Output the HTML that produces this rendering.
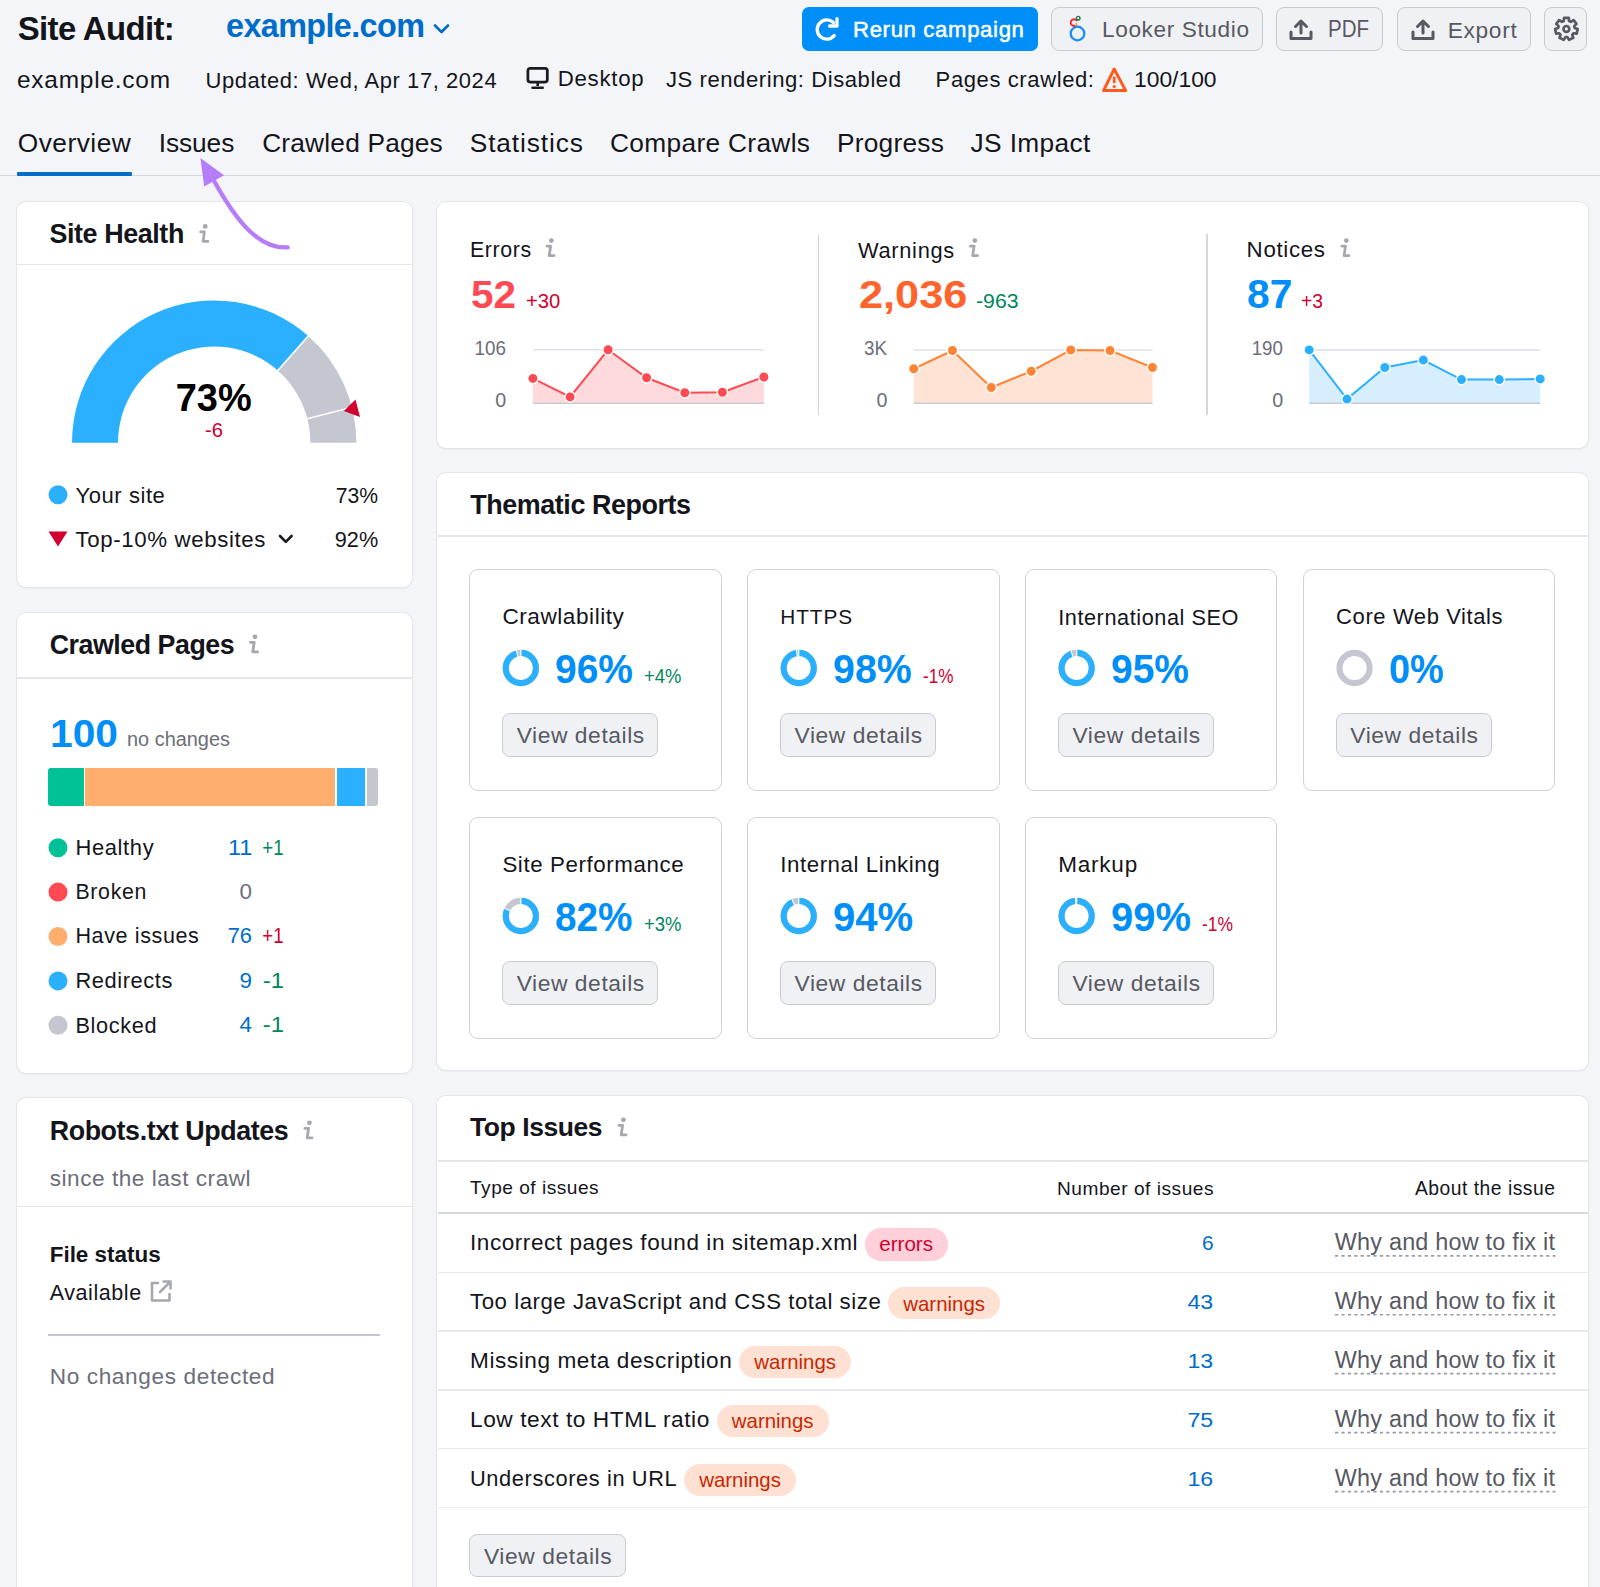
<!DOCTYPE html><html><head><meta charset="utf-8"><style>
html,body{margin:0;padding:0;}
body{width:1600px;height:1587px;position:relative;overflow:hidden;background:#f4f5f9;font-family:"Liberation Sans",sans-serif;}
.t{position:absolute;white-space:nowrap;}
</style></head><body>
<div class="t" style="left:17.75px;top:13.34px;font-size:32.91px;line-height:32.91px;color:#14151b;font-weight:700;letter-spacing:-0.631px;">Site Audit:</div>
<div class="t" style="left:226.00px;top:9.82px;font-size:32.35px;line-height:32.35px;color:#006dca;font-weight:700;letter-spacing:-0.597px;">example.com</div>
<svg style="position:absolute;left:433px;top:23px" width="17" height="12" viewBox="0 0 17 12"><path d="M2 2.5 L8.5 9 L15 2.5" fill="none" stroke="#006dca" stroke-width="2.6" stroke-linecap="round" stroke-linejoin="round"/></svg>
<div class="t" style="left:17.00px;top:67.66px;font-size:24.44px;line-height:24.44px;color:#14151b;font-weight:400;letter-spacing:0.767px;">example.com</div>
<div class="t" style="left:205.60px;top:69.78px;font-size:21.94px;line-height:21.94px;color:#14151b;font-weight:400;letter-spacing:0.582px;">Updated: Wed, Apr 17, 2024</div>
<svg style="position:absolute;left:526px;top:66px" width="23" height="24" viewBox="0 0 23 24"><rect x="1.9" y="2.4" width="19.4" height="13.6" rx="2.2" fill="none" stroke="#191b23" stroke-width="2.75"/><rect x="10.4" y="17" width="2.6" height="3" fill="#191b23"/><rect x="5.25" y="20.4" width="12.75" height="2.6" rx="1.3" fill="#191b23"/></svg>
<div class="t" style="left:557.70px;top:67.75px;font-size:22.27px;line-height:22.27px;color:#14151b;font-weight:400;letter-spacing:0.718px;">Desktop</div>
<div class="t" style="left:666.00px;top:68.92px;font-size:22.07px;line-height:22.07px;color:#14151b;font-weight:400;letter-spacing:0.559px;">JS rendering: Disabled</div>
<div class="t" style="left:935.60px;top:69.37px;font-size:22.01px;line-height:22.01px;color:#14151b;font-weight:400;letter-spacing:0.610px;">Pages crawled:</div>
<svg style="position:absolute;left:1101px;top:66px" width="28" height="28" viewBox="0 0 28 28"><path d="M13.2 3 L24.7 24.6 H2.5 Z" fill="none" stroke="#ff5a1f" stroke-width="3" stroke-linejoin="round"/><rect x="11.8" y="10.5" width="2.8" height="6.8" rx="1" fill="#ff5a1f"/><circle cx="13.2" cy="20.6" r="1.6" fill="#ff5a1f"/></svg>
<div class="t" style="left:1134.00px;top:69.26px;font-size:22.14px;line-height:22.14px;color:#14151b;font-weight:400;transform:scaleX(1.0322);transform-origin:left center;">100/100</div>
<div style="position:absolute;left:802px;top:7px;width:236px;height:44px;background:#008ff8;border-radius:7px;"></div>
<svg style="position:absolute;left:0;top:0" width="1600" height="60"><path d="M833.4 22.5 A9.6 9.6 0 1 0 834.2 35.6" fill="none" stroke="#fff" stroke-width="3.3" stroke-linecap="round"/><path d="M829.6 26 H837 V18.6" fill="none" stroke="#fff" stroke-width="3.3" stroke-linecap="round" stroke-linejoin="round"/></svg>
<div class="t" style="left:853.00px;top:19.36px;font-size:22.14px;line-height:22.14px;color:#fff;font-weight:400;-webkit-text-stroke:0.5px #fff;letter-spacing:0.659px;">Rerun campaign</div>
<div style="position:absolute;left:1051px;top:7px;width:212px;height:44px;background:#f0f1f4;border:1.3px solid #c9cbd3;border-radius:8px;box-sizing:border-box;"></div>
<svg style="position:absolute;left:1066px;top:14px" width="24" height="32" viewBox="0 0 24 32"><circle cx="11.5" cy="19.5" r="6.8" fill="none" stroke="#1a8cff" stroke-width="2.3"/><path d="M9.5 11.5 A3.3 3.3 0 1 1 11 7.2" fill="none" stroke="#f5222d" stroke-width="1.8"/><path d="M10.6 9.2 L10.2 12" stroke="#ff8c2b" stroke-width="1.6"/><circle cx="12.2" cy="4.2" r="1.8" fill="none" stroke="#1b7b4a" stroke-width="1.4"/></svg>
<div class="t" style="left:1102.00px;top:18.94px;font-size:22.63px;line-height:22.63px;color:#575963;font-weight:400;letter-spacing:0.614px;">Looker Studio</div>
<div style="position:absolute;left:1276px;top:7px;width:107px;height:44px;background:#f0f1f4;border:1.3px solid #c9cbd3;border-radius:8px;box-sizing:border-box;"></div>
<svg style="position:absolute;left:1289px;top:18px" width="24" height="23" viewBox="0 0 24 23"><path d="M12 15 V3 M6.5 8.5 L12 3 L17.5 8.5" fill="none" stroke="#575963" stroke-width="3" stroke-linecap="round" stroke-linejoin="round"/><path d="M2 14 V20.5 H22 V14" fill="none" stroke="#575963" stroke-width="3" stroke-linecap="round" stroke-linejoin="round"/></svg>
<div class="t" style="left:1327.60px;top:18.38px;font-size:23.3px;line-height:23.3px;color:#575963;font-weight:400;transform:scaleX(0.8798);transform-origin:left center;">PDF</div>
<div style="position:absolute;left:1397px;top:7px;width:134px;height:44px;background:#f0f1f4;border:1.3px solid #c9cbd3;border-radius:8px;box-sizing:border-box;"></div>
<svg style="position:absolute;left:1410.5px;top:18px" width="24" height="23" viewBox="0 0 24 23"><path d="M12 15 V3 M6.5 8.5 L12 3 L17.5 8.5" fill="none" stroke="#575963" stroke-width="3" stroke-linecap="round" stroke-linejoin="round"/><path d="M2 14 V20.5 H22 V14" fill="none" stroke="#575963" stroke-width="3" stroke-linecap="round" stroke-linejoin="round"/></svg>
<div class="t" style="left:1447.70px;top:18.89px;font-size:22.69px;line-height:22.69px;color:#575963;font-weight:400;letter-spacing:0.685px;">Export</div>
<div style="position:absolute;left:1544px;top:7px;width:43px;height:44px;background:#f0f1f4;border:1.3px solid #c9cbd3;border-radius:8px;box-sizing:border-box;"></div>
<svg style="position:absolute;left:0;top:0" width="1600" height="60"><path d="M1563.70 21.05 L1564.05 17.85 L1568.75 17.85 L1569.10 21.05 L1570.85 21.89 L1573.58 20.17 L1576.51 23.85 L1574.22 26.12 L1574.65 28.01 L1577.70 29.07 L1576.65 33.65 L1573.45 33.28 L1572.24 34.80 L1573.31 37.84 L1569.08 39.88 L1567.37 37.14 L1565.43 37.14 L1563.72 39.88 L1559.49 37.84 L1560.56 34.80 L1559.35 33.28 L1556.15 33.65 L1555.10 29.07 L1558.15 28.01 L1558.58 26.12 L1556.29 23.85 L1559.22 20.17 L1561.95 21.89 Z" fill="none" stroke="#575963" stroke-width="2.7" stroke-linejoin="round"/><circle cx="1566.4" cy="28.9" r="2.9" fill="none" stroke="#575963" stroke-width="2.7"/></svg>
<div class="t" style="left:17.80px;top:130.44px;font-size:26.3px;line-height:26.3px;color:#14151b;font-weight:400;letter-spacing:0.486px;">Overview</div>
<div class="t" style="left:158.70px;top:130.44px;font-size:26.3px;line-height:26.3px;color:#14151b;font-weight:400;letter-spacing:-0.081px;">Issues</div>
<div class="t" style="left:262.20px;top:130.44px;font-size:26.3px;line-height:26.3px;color:#14151b;font-weight:400;letter-spacing:0.188px;">Crawled Pages</div>
<div class="t" style="left:469.80px;top:130.44px;font-size:26.3px;line-height:26.3px;color:#14151b;font-weight:400;letter-spacing:0.864px;">Statistics</div>
<div class="t" style="left:610.00px;top:130.44px;font-size:26.3px;line-height:26.3px;color:#14151b;font-weight:400;letter-spacing:0.321px;">Compare Crawls</div>
<div class="t" style="left:837.00px;top:130.44px;font-size:26.3px;line-height:26.3px;color:#14151b;font-weight:400;letter-spacing:0.224px;">Progress</div>
<div class="t" style="left:970.60px;top:130.44px;font-size:26.3px;line-height:26.3px;color:#14151b;font-weight:400;letter-spacing:0.348px;">JS Impact</div>
<div style="position:absolute;left:0px;top:175px;width:1600px;height:1px;background:#d5d7de;"></div>
<div style="position:absolute;left:17px;top:172px;width:115px;height:4px;background:#006dca;border-radius:1px;"></div>
<div style="position:absolute;left:16.5px;top:201.5px;width:395.0px;height:385.0px;background:#fff;border-radius:9px;box-shadow:0 0 0 1px #e4e5ea, 0 1px 2px rgba(25,27,35,.12);"></div>
<div style="position:absolute;left:16.5px;top:612.5px;width:395.0px;height:460.0px;background:#fff;border-radius:9px;box-shadow:0 0 0 1px #e4e5ea, 0 1px 2px rgba(25,27,35,.12);"></div>
<div style="position:absolute;left:16.5px;top:1097.5px;width:395.0px;height:502.5px;background:#fff;border-radius:9px;box-shadow:0 0 0 1px #e4e5ea, 0 1px 2px rgba(25,27,35,.12);"></div>
<div style="position:absolute;left:436.5px;top:202px;width:1151.0px;height:245.5px;background:#fff;border-radius:9px;box-shadow:0 0 0 1px #e4e5ea, 0 1px 2px rgba(25,27,35,.12);"></div>
<div style="position:absolute;left:436.5px;top:473px;width:1151.0px;height:596.5px;background:#fff;border-radius:9px;box-shadow:0 0 0 1px #e4e5ea, 0 1px 2px rgba(25,27,35,.12);"></div>
<div style="position:absolute;left:436.5px;top:1095.5px;width:1151.0px;height:504.5px;background:#fff;border-radius:9px;box-shadow:0 0 0 1px #e4e5ea, 0 1px 2px rgba(25,27,35,.12);"></div>
<div class="t" style="left:49.40px;top:220.63px;font-size:26.9px;line-height:26.9px;color:#14151b;font-weight:700;letter-spacing:-0.401px;">Site Health</div>
<div style="position:absolute;left:16.5px;top:263.65px;width:395.0px;height:1.5px;background:#e4e5ea;"></div>
<div class="t" style="left:175.70px;top:380.46px;font-size:37.97px;line-height:37.97px;color:#000;font-weight:700;">73%</div>
<div class="t" style="left:205.30px;top:419.97px;font-size:20.0px;line-height:20.0px;color:#d1002f;font-weight:400;transform:scaleX(1.0123);transform-origin:left center;">-6</div>
<div class="t" style="left:75.50px;top:484.55px;font-size:22.03px;line-height:22.03px;color:#14151b;font-weight:400;letter-spacing:0.561px;">Your site</div>
<div class="t" style="right:1221.80px;top:484.94px;font-size:21.57px;line-height:21.57px;color:#14151b;font-weight:400;transform:scaleX(0.9798);transform-origin:right center;">73%</div>
<div class="t" style="left:75.50px;top:528.77px;font-size:22.24px;line-height:22.24px;color:#14151b;font-weight:400;letter-spacing:0.635px;">Top-10% websites</div>
<div class="t" style="right:1221.80px;top:529.34px;font-size:21.57px;line-height:21.57px;color:#14151b;font-weight:400;transform:scaleX(1.0053);transform-origin:right center;">92%</div>
<div class="t" style="left:49.70px;top:631.92px;font-size:26.79px;line-height:26.79px;color:#14151b;font-weight:700;letter-spacing:-0.465px;">Crawled Pages</div>
<div style="position:absolute;left:16.5px;top:677.25px;width:395.0px;height:1.5px;background:#e4e5ea;"></div>
<div class="t" style="left:49.70px;top:713.84px;font-size:39.29px;line-height:39.29px;color:#008ff8;font-weight:700;transform:scaleX(1.0374);transform-origin:left center;">100</div>
<div class="t" style="left:127.00px;top:730.04px;font-size:19.92px;line-height:19.92px;color:#6c6e79;font-weight:400;">no changes</div>
<div style="position:absolute;left:48.4px;top:768.2px;width:330px;height:38px;border-radius:3px;overflow:hidden;background:#fff"><div style="position:absolute;left:0;top:0;width:35.2px;height:38px;background:#00c296"></div><div style="position:absolute;left:36.7px;top:0;width:250.4px;height:38px;background:#ffae6e"></div><div style="position:absolute;left:288.6px;top:0;width:28px;height:38px;background:#2bb0ff"></div><div style="position:absolute;left:318.3px;top:0;width:12px;height:38px;background:#c4c7cf"></div></div>
<div class="t" style="left:75.40px;top:837.03px;font-size:21.94px;line-height:21.94px;color:#14151b;font-weight:400;letter-spacing:0.652px;">Healthy</div>
<div class="t" style="right:1348.00px;top:836.61px;font-size:22.43px;line-height:22.43px;color:#006dca;font-weight:400;transform:scaleX(1.0437);transform-origin:right center;">11</div>
<div class="t" style="right:1316.50px;top:836.61px;font-size:22.43px;line-height:22.43px;color:#00865c;font-weight:400;transform:scaleX(0.8290);transform-origin:right center;">+1</div>
<div class="t" style="left:75.40px;top:881.98px;font-size:21.29px;line-height:21.29px;color:#14151b;font-weight:400;letter-spacing:0.709px;">Broken</div>
<div class="t" style="right:1348.00px;top:881.01px;font-size:22.43px;line-height:22.43px;color:#6c6e79;font-weight:400;">0</div>
<div class="t" style="left:75.40px;top:926.17px;font-size:21.54px;line-height:21.54px;color:#14151b;font-weight:400;letter-spacing:0.618px;">Have issues</div>
<div class="t" style="right:1348.00px;top:925.41px;font-size:22.43px;line-height:22.43px;color:#006dca;font-weight:400;transform:scaleX(0.9741);transform-origin:right center;">76</div>
<div class="t" style="right:1316.50px;top:925.41px;font-size:22.43px;line-height:22.43px;color:#d1002f;font-weight:400;transform:scaleX(0.8290);transform-origin:right center;">+1</div>
<div class="t" style="left:75.40px;top:970.33px;font-size:21.82px;line-height:21.82px;color:#14151b;font-weight:400;letter-spacing:0.606px;">Redirects</div>
<div class="t" style="right:1348.00px;top:969.81px;font-size:22.43px;line-height:22.43px;color:#006dca;font-weight:400;">9</div>
<div class="t" style="right:1316.50px;top:969.81px;font-size:22.43px;line-height:22.43px;color:#00865c;font-weight:400;transform:scaleX(1.0631);transform-origin:right center;">-1</div>
<div class="t" style="left:75.40px;top:1014.82px;font-size:21.71px;line-height:21.71px;color:#14151b;font-weight:400;letter-spacing:0.678px;">Blocked</div>
<div class="t" style="right:1348.00px;top:1014.21px;font-size:22.43px;line-height:22.43px;color:#006dca;font-weight:400;">4</div>
<div class="t" style="right:1316.50px;top:1014.21px;font-size:22.43px;line-height:22.43px;color:#00865c;font-weight:400;transform:scaleX(1.0631);transform-origin:right center;">-1</div>
<div class="t" style="left:49.70px;top:1117.87px;font-size:26.85px;line-height:26.85px;color:#14151b;font-weight:700;letter-spacing:-0.418px;">Robots.txt Updates</div>
<div class="t" style="left:49.70px;top:1167.57px;font-size:22.6px;line-height:22.6px;color:#6c6e79;font-weight:400;letter-spacing:0.531px;">since the last crawl</div>
<div style="position:absolute;left:16.5px;top:1205.85px;width:395.0px;height:1.5px;background:#e4e5ea;"></div>
<div class="t" style="left:49.70px;top:1243.80px;font-size:22.45px;line-height:22.45px;color:#14151b;font-weight:700;">File status</div>
<div class="t" style="left:49.70px;top:1283.08px;font-size:21.52px;line-height:21.52px;color:#14151b;font-weight:400;letter-spacing:0.570px;">Available</div>
<div style="position:absolute;left:48.4px;top:1333.7px;width:331.40000000000003px;height:2.0px;background:#c4c7cf;"></div>
<div class="t" style="left:49.70px;top:1366.15px;font-size:22.62px;line-height:22.62px;color:#6c6e79;font-weight:400;letter-spacing:0.624px;">No changes detected</div>
<div class="t" style="left:470.00px;top:240.00px;font-size:21.38px;line-height:21.38px;color:#14151b;font-weight:400;letter-spacing:0.611px;">Errors</div>
<div class="t" style="left:471.25px;top:275.34px;font-size:39.29px;line-height:39.29px;color:#ff4953;font-weight:700;transform:scaleX(1.0298);transform-origin:left center;">52</div>
<div class="t" style="left:525.75px;top:291.37px;font-size:20.36px;line-height:20.36px;color:#d1002f;font-weight:400;transform:scaleX(0.9917);transform-origin:left center;">+30</div>
<div class="t" style="right:1093.70px;top:338.92px;font-size:19.71px;line-height:19.71px;color:#6c6e79;font-weight:400;transform:scaleX(0.9549);transform-origin:right center;">106</div>
<div class="t" style="right:1093.70px;top:391.42px;font-size:19.71px;line-height:19.71px;color:#6c6e79;font-weight:400;">0</div>
<div style="position:absolute;left:817.5px;top:233.75px;width:1.5px;height:181.25px;background:#d5d7de;"></div>
<div class="t" style="left:858.00px;top:239.61px;font-size:21.84px;line-height:21.84px;color:#14151b;font-weight:400;letter-spacing:0.688px;">Warnings</div>
<div class="t" style="left:858.75px;top:274.84px;font-size:39.29px;line-height:39.29px;color:#ff642d;font-weight:700;transform:scaleX(1.1011);transform-origin:left center;">2,036</div>
<div class="t" style="left:976.25px;top:290.87px;font-size:20.36px;line-height:20.36px;color:#00865c;font-weight:400;transform:scaleX(1.0431);transform-origin:left center;">-963</div>
<div class="t" style="right:712.50px;top:338.92px;font-size:19.71px;line-height:19.71px;color:#6c6e79;font-weight:400;transform:scaleX(0.9540);transform-origin:right center;">3K</div>
<div class="t" style="right:712.50px;top:391.42px;font-size:19.71px;line-height:19.71px;color:#6c6e79;font-weight:400;">0</div>
<div style="position:absolute;left:1206px;top:233.75px;width:1.5px;height:181.25px;background:#d5d7de;"></div>
<div class="t" style="left:1246.60px;top:239.20px;font-size:22.33px;line-height:22.33px;color:#14151b;font-weight:400;letter-spacing:0.657px;">Notices</div>
<div class="t" style="left:1247.00px;top:274.44px;font-size:40.0px;line-height:40.0px;color:#008ff8;font-weight:700;transform:scaleX(1.0205);transform-origin:left center;">87</div>
<div class="t" style="left:1301.40px;top:291.07px;font-size:20.36px;line-height:20.36px;color:#d1002f;font-weight:400;transform:scaleX(0.9434);transform-origin:left center;">+3</div>
<div class="t" style="right:316.90px;top:339.22px;font-size:19.71px;line-height:19.71px;color:#6c6e79;font-weight:400;transform:scaleX(0.9489);transform-origin:right center;">190</div>
<div class="t" style="right:316.90px;top:391.42px;font-size:19.71px;line-height:19.71px;color:#6c6e79;font-weight:400;">0</div>
<div class="t" style="left:470.30px;top:491.72px;font-size:26.91px;line-height:26.91px;color:#14151b;font-weight:700;letter-spacing:-0.438px;">Thematic Reports</div>
<div style="position:absolute;left:437.5px;top:535.15px;width:1150.0px;height:1.5px;background:#e4e5ea;"></div>
<div style="position:absolute;left:469.4px;top:568.75px;width:252.30000000000007px;height:222.20000000000005px;background:#fff;border:1.5px solid #cfd2da;border-radius:9px;box-sizing:border-box;"></div>
<div class="t" style="left:502.40px;top:605.89px;font-size:22.58px;line-height:22.58px;color:#14151b;font-weight:400;letter-spacing:0.552px;">Crawlability</div>
<div class="t" style="left:554.90px;top:648.56px;font-size:40.57px;line-height:40.57px;color:#008ff8;font-weight:700;transform:scaleX(0.9606);transform-origin:left center;">96%</div>
<div class="t" style="left:644.30px;top:665.61px;font-size:20.43px;line-height:20.43px;color:#00865c;font-weight:400;transform:scaleX(0.8997);transform-origin:left center;">+4%</div>
<div style="position:absolute;left:502.04999999999995px;top:657.45px;width:156.29999999999995px;height:43.799999999999955px;"></div>
<div style="position:absolute;left:502.04999999999995px;top:713.2px;width:156.29999999999995px;height:43.799999999999955px;background:#f0f1f4;border:1.3px solid #c9cbd3;border-radius:8px;box-sizing:border-box;"></div>
<div class="t" style="left:516.65px;top:724.00px;font-size:22.8px;line-height:22.8px;color:#575963;font-weight:400;letter-spacing:0.578px;">View details</div>
<div style="position:absolute;left:747.3px;top:568.75px;width:252.29999999999995px;height:222.20000000000005px;background:#fff;border:1.5px solid #cfd2da;border-radius:9px;box-sizing:border-box;"></div>
<div class="t" style="left:780.30px;top:607.39px;font-size:20.8px;line-height:20.8px;color:#14151b;font-weight:400;letter-spacing:0.893px;">HTTPS</div>
<div class="t" style="left:832.80px;top:648.56px;font-size:40.57px;line-height:40.57px;color:#008ff8;font-weight:700;transform:scaleX(0.9699);transform-origin:left center;">98%</div>
<div class="t" style="left:922.95px;top:665.61px;font-size:20.43px;line-height:20.43px;color:#d1002f;font-weight:400;transform:scaleX(0.8395);transform-origin:left center;">-1%</div>
<div style="position:absolute;left:779.9499999999999px;top:657.45px;width:156.30000000000007px;height:43.799999999999955px;"></div>
<div style="position:absolute;left:779.9499999999999px;top:713.2px;width:156.30000000000007px;height:43.799999999999955px;background:#f0f1f4;border:1.3px solid #c9cbd3;border-radius:8px;box-sizing:border-box;"></div>
<div class="t" style="left:794.55px;top:724.00px;font-size:22.8px;line-height:22.8px;color:#575963;font-weight:400;letter-spacing:0.578px;">View details</div>
<div style="position:absolute;left:1025.1999999999998px;top:568.75px;width:252.29999999999995px;height:222.20000000000005px;background:#fff;border:1.5px solid #cfd2da;border-radius:9px;box-sizing:border-box;"></div>
<div class="t" style="left:1058.20px;top:606.63px;font-size:21.7px;line-height:21.7px;color:#14151b;font-weight:400;letter-spacing:0.564px;">International SEO</div>
<div class="t" style="left:1110.70px;top:648.56px;font-size:40.57px;line-height:40.57px;color:#008ff8;font-weight:700;transform:scaleX(0.9606);transform-origin:left center;">95%</div>
<div style="position:absolute;left:1057.85px;top:657.45px;width:156.29999999999995px;height:43.799999999999955px;"></div>
<div style="position:absolute;left:1057.85px;top:713.2px;width:156.29999999999995px;height:43.799999999999955px;background:#f0f1f4;border:1.3px solid #c9cbd3;border-radius:8px;box-sizing:border-box;"></div>
<div class="t" style="left:1072.45px;top:724.00px;font-size:22.8px;line-height:22.8px;color:#575963;font-weight:400;letter-spacing:0.578px;">View details</div>
<div style="position:absolute;left:1303.1px;top:568.75px;width:252.29999999999995px;height:222.20000000000005px;background:#fff;border:1.5px solid #cfd2da;border-radius:9px;box-sizing:border-box;"></div>
<div class="t" style="left:1336.10px;top:606.38px;font-size:22.0px;line-height:22.0px;color:#14151b;font-weight:400;letter-spacing:0.597px;">Core Web Vitals</div>
<div class="t" style="left:1388.60px;top:648.56px;font-size:40.57px;line-height:40.57px;color:#008ff8;font-weight:700;transform:scaleX(0.9346);transform-origin:left center;">0%</div>
<div style="position:absolute;left:1335.75px;top:657.45px;width:156.29999999999995px;height:43.799999999999955px;"></div>
<div style="position:absolute;left:1335.75px;top:713.2px;width:156.29999999999995px;height:43.799999999999955px;background:#f0f1f4;border:1.3px solid #c9cbd3;border-radius:8px;box-sizing:border-box;"></div>
<div class="t" style="left:1350.35px;top:724.00px;font-size:22.8px;line-height:22.8px;color:#575963;font-weight:400;letter-spacing:0.578px;">View details</div>
<div style="position:absolute;left:469.4px;top:816.75px;width:252.30000000000007px;height:222.20000000000005px;background:#fff;border:1.5px solid #cfd2da;border-radius:9px;box-sizing:border-box;"></div>
<div class="t" style="left:502.40px;top:854.11px;font-size:22.31px;line-height:22.31px;color:#14151b;font-weight:400;letter-spacing:0.603px;">Site Performance</div>
<div class="t" style="left:554.90px;top:896.56px;font-size:40.57px;line-height:40.57px;color:#008ff8;font-weight:700;transform:scaleX(0.9557);transform-origin:left center;">82%</div>
<div class="t" style="left:643.90px;top:913.61px;font-size:20.43px;line-height:20.43px;color:#00865c;font-weight:400;transform:scaleX(0.9045);transform-origin:left center;">+3%</div>
<div style="position:absolute;left:502.04999999999995px;top:905.45px;width:156.29999999999995px;height:43.799999999999955px;"></div>
<div style="position:absolute;left:502.04999999999995px;top:961.2px;width:156.29999999999995px;height:43.799999999999955px;background:#f0f1f4;border:1.3px solid #c9cbd3;border-radius:8px;box-sizing:border-box;"></div>
<div class="t" style="left:516.65px;top:972.00px;font-size:22.8px;line-height:22.8px;color:#575963;font-weight:400;letter-spacing:0.578px;">View details</div>
<div style="position:absolute;left:747.3px;top:816.75px;width:252.29999999999995px;height:222.20000000000005px;background:#fff;border:1.5px solid #cfd2da;border-radius:9px;box-sizing:border-box;"></div>
<div class="t" style="left:780.30px;top:854.11px;font-size:22.32px;line-height:22.32px;color:#14151b;font-weight:400;letter-spacing:0.535px;">Internal Linking</div>
<div class="t" style="left:832.80px;top:896.56px;font-size:40.57px;line-height:40.57px;color:#008ff8;font-weight:700;transform:scaleX(0.9890);transform-origin:left center;">94%</div>
<div style="position:absolute;left:779.9499999999999px;top:905.45px;width:156.30000000000007px;height:43.799999999999955px;"></div>
<div style="position:absolute;left:779.9499999999999px;top:961.2px;width:156.30000000000007px;height:43.799999999999955px;background:#f0f1f4;border:1.3px solid #c9cbd3;border-radius:8px;box-sizing:border-box;"></div>
<div class="t" style="left:794.55px;top:972.00px;font-size:22.8px;line-height:22.8px;color:#575963;font-weight:400;letter-spacing:0.578px;">View details</div>
<div style="position:absolute;left:1025.1999999999998px;top:816.75px;width:252.29999999999995px;height:222.20000000000005px;background:#fff;border:1.5px solid #cfd2da;border-radius:9px;box-sizing:border-box;"></div>
<div class="t" style="left:1058.20px;top:853.95px;font-size:22.51px;line-height:22.51px;color:#14151b;font-weight:400;letter-spacing:0.789px;">Markup</div>
<div class="t" style="left:1110.70px;top:896.56px;font-size:40.57px;line-height:40.57px;color:#008ff8;font-weight:700;transform:scaleX(0.9853);transform-origin:left center;">99%</div>
<div class="t" style="left:1202.10px;top:913.61px;font-size:20.43px;line-height:20.43px;color:#d1002f;font-weight:400;transform:scaleX(0.8533);transform-origin:left center;">-1%</div>
<div style="position:absolute;left:1057.85px;top:905.45px;width:156.29999999999995px;height:43.799999999999955px;"></div>
<div style="position:absolute;left:1057.85px;top:961.2px;width:156.29999999999995px;height:43.799999999999955px;background:#f0f1f4;border:1.3px solid #c9cbd3;border-radius:8px;box-sizing:border-box;"></div>
<div class="t" style="left:1072.45px;top:972.00px;font-size:22.8px;line-height:22.8px;color:#575963;font-weight:400;letter-spacing:0.578px;">View details</div>
<div class="t" style="left:470.00px;top:1114.17px;font-size:26.5px;line-height:26.5px;color:#14151b;font-weight:700;letter-spacing:-0.438px;">Top Issues</div>
<div style="position:absolute;left:437.5px;top:1160.0px;width:1150.0px;height:1.5px;background:#e4e5ea;"></div>
<div class="t" style="left:470.00px;top:1178.41px;font-size:19.13px;line-height:19.13px;color:#14151b;font-weight:400;letter-spacing:0.498px;">Type of issues</div>
<div class="t" style="left:1057.00px;top:1178.91px;font-size:19.13px;line-height:19.13px;color:#14151b;font-weight:400;letter-spacing:0.524px;">Number of issues</div>
<div class="t" style="left:1415.00px;top:1178.77px;font-size:19.29px;line-height:19.29px;color:#14151b;font-weight:400;letter-spacing:0.502px;">About the issue</div>
<div style="position:absolute;left:437.5px;top:1212.0px;width:1150.0px;height:2.0px;background:#d5d7de;"></div>
<div class="t" style="left:470.00px;top:1231.74px;font-size:22.52px;line-height:22.52px;color:#14151b;font-weight:400;letter-spacing:0.558px;">Incorrect pages found in sitemap.xml</div>
<div style="position:absolute;left:864.5px;top:1228.25px;width:83.0px;height:32.25px;background:#ffd0d9;border-radius:16px;"></div>
<div class="t" style="left:879.25px;top:1234.42px;font-size:20.59px;line-height:20.59px;color:#d1002f;font-weight:400;">errors</div>
<div class="t" style="right:386.50px;top:1233.14px;font-size:20.86px;line-height:20.86px;color:#006dca;font-weight:400;">6</div>
<div class="t" style="left:1334.80px;top:1230.90px;font-size:23.39px;line-height:23.39px;color:#575963;font-weight:400;letter-spacing:0.221px;">Why and how to fix it</div>
<div style="position:absolute;left:437.5px;top:1271.75px;width:1150.0px;height:1.5px;background:#e8e9ee;"></div>
<div class="t" style="left:470.00px;top:1290.94px;font-size:22.22px;line-height:22.22px;color:#14151b;font-weight:400;letter-spacing:0.539px;">Too large JavaScript and CSS total size</div>
<div style="position:absolute;left:888.25px;top:1287.2px;width:111.75px;height:32.25px;background:#ffe1d3;border-radius:16px;"></div>
<div class="t" style="left:903.25px;top:1293.51px;font-size:20.43px;line-height:20.43px;color:#c82700;font-weight:400;">warnings</div>
<div class="t" style="right:386.50px;top:1292.09px;font-size:20.86px;line-height:20.86px;color:#006dca;font-weight:400;transform:scaleX(1.1099);transform-origin:right center;">43</div>
<div class="t" style="left:1334.80px;top:1289.85px;font-size:23.39px;line-height:23.39px;color:#575963;font-weight:400;letter-spacing:0.221px;">Why and how to fix it</div>
<div style="position:absolute;left:437.5px;top:1330.45px;width:1150.0px;height:1.5px;background:#e8e9ee;"></div>
<div class="t" style="left:470.00px;top:1349.57px;font-size:22.6px;line-height:22.6px;color:#14151b;font-weight:400;letter-spacing:0.570px;">Missing meta description</div>
<div style="position:absolute;left:739.3px;top:1346.15px;width:111.75px;height:32.25px;background:#ffe1d3;border-radius:16px;"></div>
<div class="t" style="left:754.30px;top:1352.46px;font-size:20.43px;line-height:20.43px;color:#c82700;font-weight:400;">warnings</div>
<div class="t" style="right:386.50px;top:1351.04px;font-size:20.86px;line-height:20.86px;color:#006dca;font-weight:400;transform:scaleX(1.1099);transform-origin:right center;">13</div>
<div class="t" style="left:1334.80px;top:1348.80px;font-size:23.39px;line-height:23.39px;color:#575963;font-weight:400;letter-spacing:0.221px;">Why and how to fix it</div>
<div style="position:absolute;left:437.5px;top:1389.15px;width:1150.0px;height:1.5px;background:#e8e9ee;"></div>
<div class="t" style="left:470.00px;top:1408.44px;font-size:22.69px;line-height:22.69px;color:#14151b;font-weight:400;letter-spacing:0.567px;">Low text to HTML ratio</div>
<div style="position:absolute;left:716.8px;top:1405.1px;width:111.75px;height:32.25px;background:#ffe1d3;border-radius:16px;"></div>
<div class="t" style="left:731.80px;top:1411.41px;font-size:20.43px;line-height:20.43px;color:#c82700;font-weight:400;">warnings</div>
<div class="t" style="right:386.50px;top:1409.99px;font-size:20.86px;line-height:20.86px;color:#006dca;font-weight:400;transform:scaleX(1.1099);transform-origin:right center;">75</div>
<div class="t" style="left:1334.80px;top:1407.75px;font-size:23.39px;line-height:23.39px;color:#575963;font-weight:400;letter-spacing:0.221px;">Why and how to fix it</div>
<div style="position:absolute;left:437.5px;top:1447.85px;width:1150.0px;height:1.5px;background:#e8e9ee;"></div>
<div class="t" style="left:470.00px;top:1468.14px;font-size:21.81px;line-height:21.81px;color:#14151b;font-weight:400;letter-spacing:0.609px;">Underscores in URL</div>
<div style="position:absolute;left:684.2px;top:1464.05px;width:111.75px;height:32.25px;background:#ffe1d3;border-radius:16px;"></div>
<div class="t" style="left:699.20px;top:1470.36px;font-size:20.43px;line-height:20.43px;color:#c82700;font-weight:400;">warnings</div>
<div class="t" style="right:386.50px;top:1468.94px;font-size:20.86px;line-height:20.86px;color:#006dca;font-weight:400;transform:scaleX(1.1099);transform-origin:right center;">16</div>
<div class="t" style="left:1334.80px;top:1466.70px;font-size:23.39px;line-height:23.39px;color:#575963;font-weight:400;letter-spacing:0.221px;">Why and how to fix it</div>
<div style="position:absolute;left:437.5px;top:1506.55px;width:1150.0px;height:1.5px;background:#e8e9ee;"></div>
<div style="position:absolute;left:469.4px;top:1534.3px;width:156.30000000000007px;height:43.100000000000136px;background:#f0f1f4;border:1.3px solid #c9cbd3;border-radius:8px;box-sizing:border-box;"></div>
<div class="t" style="left:484.00px;top:1545.10px;font-size:22.8px;line-height:22.8px;color:#575963;font-weight:400;letter-spacing:0.578px;">View details</div>
<svg style="position:absolute;left:0;top:0" width="1600" height="1587"><g transform="translate(199.80,224.00)"><circle cx="5.4" cy="2.4" r="2.4" fill="#a6a8b0"/><path d="M0.9 7.9 H4.6 L3.2 17.4 H8.1" fill="none" stroke="#a6a8b0" stroke-width="2.8" stroke-linecap="round" stroke-linejoin="round"/></g><path d="M72.00 442.70 A142.2 142.2 0 0 1 308.24 336.03 L277.82 370.54 A96.2 96.2 0 0 0 118.00 442.70 Z" fill="#2bb0ff"/><path d="M308.24 336.03 A142.2 142.2 0 0 1 356.40 442.70 L310.40 442.70 A96.2 96.2 0 0 0 277.82 370.54 Z" fill="#c4c7cf"/><line x1="277.16" y1="371.29" x2="308.90" y2="335.28" stroke="#fff" stroke-width="1.6"/><line x1="306.41" y1="419.02" x2="352.90" y2="407.09" stroke="#fff" stroke-width="1.6"/><path d="M343.9 411 L355.5 399.5 L360 417 Z" fill="#d1002f"/><circle cx="58" cy="494.8" r="9.5" fill="#2bb0ff"/><path d="M48.5 531.5 H67.5 L58 546.5 Z" fill="#d1002f"/><path d="M280 536 L285.8 541.8 L291.6 536" fill="none" stroke="#191b23" stroke-width="2.6" stroke-linecap="round" stroke-linejoin="round"/><g transform="translate(249.60,634.40)"><circle cx="5.4" cy="2.4" r="2.4" fill="#a6a8b0"/><path d="M0.9 7.9 H4.6 L3.2 17.4 H8.1" fill="none" stroke="#a6a8b0" stroke-width="2.8" stroke-linecap="round" stroke-linejoin="round"/></g><circle cx="58" cy="847.70" r="9.5" fill="#00c296"/><circle cx="58" cy="892.10" r="9.5" fill="#ff4953"/><circle cx="58" cy="936.50" r="9.5" fill="#ffae6e"/><circle cx="58" cy="980.90" r="9.5" fill="#2bb0ff"/><circle cx="58" cy="1025.30" r="9.5" fill="#c4c7cf"/><g transform="translate(304.00,1120.40)"><circle cx="5.4" cy="2.4" r="2.4" fill="#a6a8b0"/><path d="M0.9 7.9 H4.6 L3.2 17.4 H8.1" fill="none" stroke="#a6a8b0" stroke-width="2.8" stroke-linecap="round" stroke-linejoin="round"/></g><g fill="none" stroke="#a6a8b0" stroke-width="2.6" stroke-linecap="round" stroke-linejoin="round"><path d="M158 1283 H152 V1300.5 H169.5 V1294"/><path d="M160 1292 L170 1282 M163.5 1281.5 H170.5 V1288.5"/></g><g transform="translate(546.00,238.20)"><circle cx="5.4" cy="2.4" r="2.4" fill="#a6a8b0"/><path d="M0.9 7.9 H4.6 L3.2 17.4 H8.1" fill="none" stroke="#a6a8b0" stroke-width="2.8" stroke-linecap="round" stroke-linejoin="round"/></g><line x1="532.9" y1="349.75" x2="763.9" y2="349.75" stroke="#e0e1e9" stroke-width="1.6"/><polygon points="532.9,403.3 532.90,378.40 570.10,396.90 608.10,349.75 646.60,377.80 684.80,392.70 722.40,392.20 763.90,377.00 763.9,403.3" fill="#ffdadd"/><line x1="532.9" y1="403.3" x2="763.9" y2="403.3" stroke="#c9cbd3" stroke-width="1.6"/><polyline points="532.90,378.40 570.10,396.90 608.10,349.75 646.60,377.80 684.80,392.70 722.40,392.20 763.90,377.00" fill="none" stroke="#ff4953" stroke-width="2"/><circle cx="532.90" cy="378.40" r="5.2" fill="#ff4953" stroke="#fff" stroke-width="1.4"/><circle cx="570.10" cy="396.90" r="5.2" fill="#ff4953" stroke="#fff" stroke-width="1.4"/><circle cx="608.10" cy="349.75" r="5.2" fill="#ff4953" stroke="#fff" stroke-width="1.4"/><circle cx="646.60" cy="377.80" r="5.2" fill="#ff4953" stroke="#fff" stroke-width="1.4"/><circle cx="684.80" cy="392.70" r="5.2" fill="#ff4953" stroke="#fff" stroke-width="1.4"/><circle cx="722.40" cy="392.20" r="5.2" fill="#ff4953" stroke="#fff" stroke-width="1.4"/><circle cx="763.90" cy="377.00" r="5.2" fill="#ff4953" stroke="#fff" stroke-width="1.4"/><g transform="translate(969.50,238.20)"><circle cx="5.4" cy="2.4" r="2.4" fill="#a6a8b0"/><path d="M0.9 7.9 H4.6 L3.2 17.4 H8.1" fill="none" stroke="#a6a8b0" stroke-width="2.8" stroke-linecap="round" stroke-linejoin="round"/></g><line x1="913.75" y1="350" x2="1152.5" y2="350" stroke="#e0e1e9" stroke-width="1.6"/><polygon points="913.75,403.25 913.75,368.75 952.50,350.50 991.25,387.50 1031.25,371.25 1070.75,350.00 1110.00,350.50 1152.50,367.50 1152.5,403.25" fill="#ffe4d6"/><line x1="913.75" y1="403.25" x2="1152.5" y2="403.25" stroke="#c9cbd3" stroke-width="1.6"/><polyline points="913.75,368.75 952.50,350.50 991.25,387.50 1031.25,371.25 1070.75,350.00 1110.00,350.50 1152.50,367.50" fill="none" stroke="#ff8534" stroke-width="2"/><circle cx="913.75" cy="368.75" r="5.2" fill="#ff8534" stroke="#fff" stroke-width="1.4"/><circle cx="952.50" cy="350.50" r="5.2" fill="#ff8534" stroke="#fff" stroke-width="1.4"/><circle cx="991.25" cy="387.50" r="5.2" fill="#ff8534" stroke="#fff" stroke-width="1.4"/><circle cx="1031.25" cy="371.25" r="5.2" fill="#ff8534" stroke="#fff" stroke-width="1.4"/><circle cx="1070.75" cy="350.00" r="5.2" fill="#ff8534" stroke="#fff" stroke-width="1.4"/><circle cx="1110.00" cy="350.50" r="5.2" fill="#ff8534" stroke="#fff" stroke-width="1.4"/><circle cx="1152.50" cy="367.50" r="5.2" fill="#ff8534" stroke="#fff" stroke-width="1.4"/><g transform="translate(1340.90,238.20)"><circle cx="5.4" cy="2.4" r="2.4" fill="#a6a8b0"/><path d="M0.9 7.9 H4.6 L3.2 17.4 H8.1" fill="none" stroke="#a6a8b0" stroke-width="2.8" stroke-linecap="round" stroke-linejoin="round"/></g><line x1="1309.2" y1="349.9" x2="1540.2" y2="349.9" stroke="#e0e1e9" stroke-width="1.6"/><polygon points="1309.2,403.3 1309.20,349.90 1347.00,399.10 1384.80,367.50 1423.30,360.10 1461.50,379.60 1499.30,379.60 1540.20,378.90 1540.2,403.3" fill="#d6eefe"/><line x1="1309.2" y1="403.3" x2="1540.2" y2="403.3" stroke="#c9cbd3" stroke-width="1.6"/><polyline points="1309.20,349.90 1347.00,399.10 1384.80,367.50 1423.30,360.10 1461.50,379.60 1499.30,379.60 1540.20,378.90" fill="none" stroke="#2bb0ff" stroke-width="2"/><circle cx="1309.20" cy="349.90" r="5.2" fill="#2bb0ff" stroke="#fff" stroke-width="1.4"/><circle cx="1347.00" cy="399.10" r="5.2" fill="#2bb0ff" stroke="#fff" stroke-width="1.4"/><circle cx="1384.80" cy="367.50" r="5.2" fill="#2bb0ff" stroke="#fff" stroke-width="1.4"/><circle cx="1423.30" cy="360.10" r="5.2" fill="#2bb0ff" stroke="#fff" stroke-width="1.4"/><circle cx="1461.50" cy="379.60" r="5.2" fill="#2bb0ff" stroke="#fff" stroke-width="1.4"/><circle cx="1499.30" cy="379.60" r="5.2" fill="#2bb0ff" stroke="#fff" stroke-width="1.4"/><circle cx="1540.20" cy="378.90" r="5.2" fill="#2bb0ff" stroke="#fff" stroke-width="1.4"/><circle cx="520.85" cy="668.00" r="15.1" fill="none" stroke="#c4c7cf" stroke-width="6.1"/><circle cx="520.85" cy="668.00" r="15.1" fill="none" stroke="#2bb0ff" stroke-width="6.1" stroke-dasharray="91.08 94.88" transform="rotate(-90 520.85 668.00)"/><line x1="520.85" y1="656.45" x2="520.85" y2="649.35" stroke="#fff" stroke-width="1.2"/><line x1="517.98" y1="656.81" x2="516.21" y2="649.94" stroke="#fff" stroke-width="1.2"/><circle cx="798.75" cy="668.00" r="15.1" fill="none" stroke="#c4c7cf" stroke-width="6.1"/><circle cx="798.75" cy="668.00" r="15.1" fill="none" stroke="#2bb0ff" stroke-width="6.1" stroke-dasharray="92.98 94.88" transform="rotate(-90 798.75 668.00)"/><line x1="798.75" y1="656.45" x2="798.75" y2="649.35" stroke="#fff" stroke-width="1.2"/><line x1="797.30" y1="656.54" x2="796.41" y2="649.50" stroke="#fff" stroke-width="1.2"/><circle cx="1076.65" cy="668.00" r="15.1" fill="none" stroke="#c4c7cf" stroke-width="6.1"/><circle cx="1076.65" cy="668.00" r="15.1" fill="none" stroke="#2bb0ff" stroke-width="6.1" stroke-dasharray="90.13 94.88" transform="rotate(-90 1076.65 668.00)"/><line x1="1076.65" y1="656.45" x2="1076.65" y2="649.35" stroke="#fff" stroke-width="1.2"/><line x1="1073.08" y1="657.02" x2="1070.89" y2="650.26" stroke="#fff" stroke-width="1.2"/><circle cx="1354.55" cy="668.00" r="15.1" fill="none" stroke="#c4c7cf" stroke-width="6.1"/><circle cx="520.85" cy="916.00" r="15.1" fill="none" stroke="#c4c7cf" stroke-width="6.1"/><circle cx="520.85" cy="916.00" r="15.1" fill="none" stroke="#2bb0ff" stroke-width="6.1" stroke-dasharray="77.80 94.88" transform="rotate(-90 520.85 916.00)"/><line x1="520.85" y1="904.45" x2="520.85" y2="897.35" stroke="#fff" stroke-width="1.2"/><line x1="510.40" y1="911.08" x2="503.97" y2="908.06" stroke="#fff" stroke-width="1.2"/><circle cx="798.75" cy="916.00" r="15.1" fill="none" stroke="#c4c7cf" stroke-width="6.1"/><circle cx="798.75" cy="916.00" r="15.1" fill="none" stroke="#2bb0ff" stroke-width="6.1" stroke-dasharray="89.18 94.88" transform="rotate(-90 798.75 916.00)"/><line x1="798.75" y1="904.45" x2="798.75" y2="897.35" stroke="#fff" stroke-width="1.2"/><line x1="794.50" y1="905.26" x2="791.88" y2="898.66" stroke="#fff" stroke-width="1.2"/><circle cx="1076.65" cy="916.00" r="15.1" fill="none" stroke="#c4c7cf" stroke-width="6.1"/><circle cx="1076.65" cy="916.00" r="15.1" fill="none" stroke="#2bb0ff" stroke-width="6.1" stroke-dasharray="93.93 94.88" transform="rotate(-90 1076.65 916.00)"/><line x1="1076.65" y1="904.45" x2="1076.65" y2="897.35" stroke="#fff" stroke-width="1.2"/><line x1="1075.92" y1="904.47" x2="1075.48" y2="897.39" stroke="#fff" stroke-width="1.2"/><g transform="translate(618.00,1117.45)"><circle cx="5.4" cy="2.4" r="2.4" fill="#a6a8b0"/><path d="M0.9 7.9 H4.6 L3.2 17.4 H8.1" fill="none" stroke="#a6a8b0" stroke-width="2.8" stroke-linecap="round" stroke-linejoin="round"/></g><line x1="1335" y1="1255.80" x2="1555.5" y2="1255.80" stroke="#9a9ca6" stroke-width="1.7" stroke-dasharray="3.2 3.2"/><line x1="1335" y1="1314.75" x2="1555.5" y2="1314.75" stroke="#9a9ca6" stroke-width="1.7" stroke-dasharray="3.2 3.2"/><line x1="1335" y1="1373.70" x2="1555.5" y2="1373.70" stroke="#9a9ca6" stroke-width="1.7" stroke-dasharray="3.2 3.2"/><line x1="1335" y1="1432.65" x2="1555.5" y2="1432.65" stroke="#9a9ca6" stroke-width="1.7" stroke-dasharray="3.2 3.2"/><line x1="1335" y1="1491.60" x2="1555.5" y2="1491.60" stroke="#9a9ca6" stroke-width="1.7" stroke-dasharray="3.2 3.2"/></svg>
<svg style="position:absolute;left:0;top:0" width="1600" height="1587"><path d="M287.7 247.4 C258 249 236 220 214.6 181.9" fill="none" stroke="#b77cfa" stroke-width="4.2" stroke-linecap="round"/><path d="M200.4 158 L224 175.3 L204.2 186.4 Z" fill="#b77cfa"/></svg>
</body></html>
